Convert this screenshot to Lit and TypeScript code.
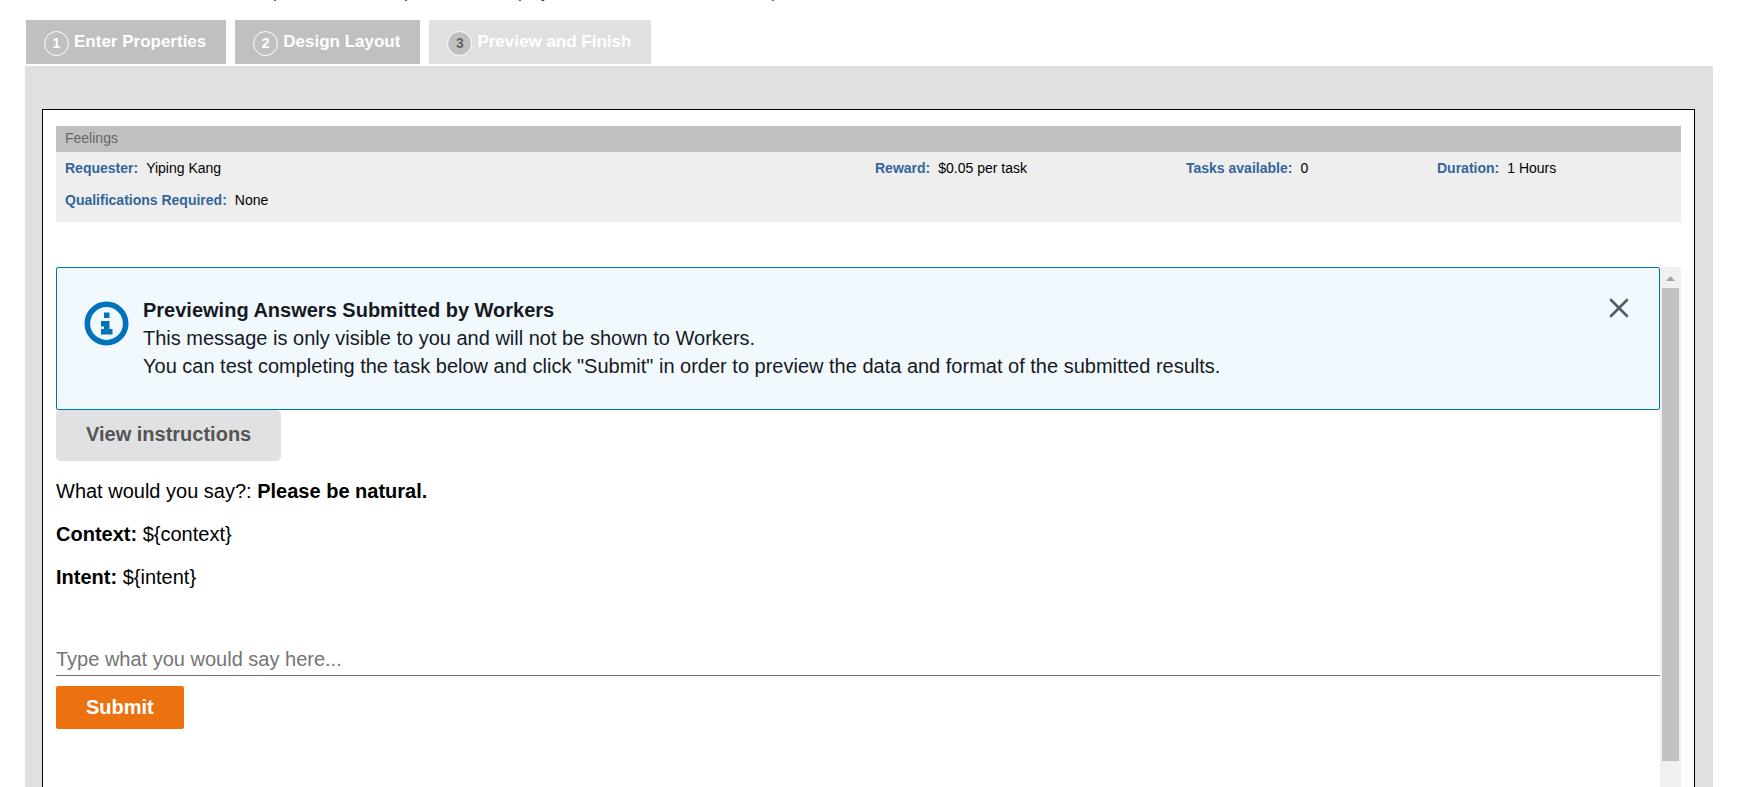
import { LitElement, html, css } from "lit";
import { customElement, state } from "lit/decorators.js";

@customElement("app-root")
export class AppRoot extends LitElement {
  @state() private noticeOpen = true;
  @state() private active = 3;

  private steps = ["Enter Properties", "Design Layout", "Preview and Finish"];

  static styles = css`
    :host {
      display: flex;
      flex-direction: column;
      box-sizing: border-box;
      height: 100vh;
      overflow: hidden;
      padding: 0 37px 0 25px;
      background: #fff;
      color: #000;
      font-family: "Liberation Sans", Arial, sans-serif;
      font-size: 20px;
      line-height: 28px;
    }
    * { box-sizing: border-box; }
    button { font-family: inherit; border: 0; cursor: pointer; }
    /* Only the descenders of the scrolled-off line remain in view. */
    .intro {
      display: grid;
      grid-template-columns: 131px 114px 24px 229px auto;
      align-content: end;
      height: 3px;
      margin-bottom: 17px;
      padding-left: 248px;
      overflow: hidden;
      flex: none;
      color: #333;
      font-size: 17px;
      line-height: 20px;
    }
    .steps { display: flex; gap: 9px; padding-left: 1px; margin-bottom: 2px; flex: none; }
    .step {
      display: flex;
      align-items: center;
      gap: 5px;
      height: 44px;
      padding: 0 20px 0 18px;
      background: #c0c0c0;
      color: #fff;
      font-size: 17px;
      font-weight: bold;
      line-height: 44px;
    }
    .step.active { background: #e0e0e0; }
    .num {
      width: 25px;
      height: 25px;
      margin-top: 3px;
      border: 1px solid #fff;
      border-radius: 50%;
      font-size: 14px;
      line-height: 22px;
      text-align: center;
    }
    .active .num { background: #c0c0c0; color: #666; }
    .panel {
      flex: 1;
      min-height: 0;
      display: flex;
      padding: 43px 18px 0 17px;
      background: #e0e0e0;
    }
    .frame {
      flex: 1;
      min-width: 0;
      display: flex;
      flex-direction: column;
      padding: 16px 13px 0;
      background: #fff;
      border: 1px solid #000;
      border-bottom: 0;
    }
    .summary { background: #eee; font-size: 14px; margin-bottom: 45px; flex: none; }
    .title {
      margin: 0;
      padding: 0 9px 2px;
      background: #c0c0c0;
      color: #666;
      font-size: 14px;
      font-weight: normal;
      line-height: 24px;
    }
    .facts {
      display: grid;
      grid-template-columns: 810fr 311fr 251fr 244fr;
      align-content: start;
      margin: 0;
      height: 70px;
      padding-left: 9px;
      line-height: 32px;
    }
    .fact { display: flex; gap: 8px; white-space: nowrap; }
    dt { color: #369; font-weight: bold; }
    dd { margin: 0; }
    .viewport { flex: 1; min-height: 0; display: flex; }
    .content { flex: 1; min-width: 0; }
    .track {
      width: 21px;
      display: flex;
      flex-direction: column;
      align-items: center;
      background: #f0f0f0;
    }
    .up { height: 21px; width: 21px; flex: none; }
    .thumb { width: 17px; height: 91%; background: #c1c1c1; }
    .notice {
      display: flex;
      align-items: flex-start;
      gap: 14px;
      height: 143px;
      padding: 28px 28px 28px 27px;
      background: #f1f9ff;
      border: 1px solid #0073bb;
      border-radius: 2px;
      color: #16191f;
    }
    .info { margin-top: 5px; width: 45px; height: 45px; flex: none; }
    .message { flex: 1; }
    .message p, .message h2 { margin: 0; font-size: 20px; line-height: 28px; }
    .close { padding: 0; width: 24px; height: 24px; background: none; }
    .instructions {
      display: block;
      height: 51px;
      padding: 0 30px 2px;
      border-radius: 5px;
      background: #e0e1e3;
      color: #555;
      font-size: 20px;
      font-weight: bold;
    }
    .prompt { margin: 17px 0 0; line-height: 26px; }
    .answer {
      display: block;
      width: 100%;
      height: 36px;
      margin: 50px 0 10px;
      padding: 4px 0 0;
      border: 0;
      border-bottom: 1px solid #737373;
      border-radius: 0;
      outline: 0;
      background: none;
      font-family: inherit;
      font-size: 20px;
    }
    .answer::placeholder { color: #757575; }
    .submit {
      height: 43px;
      padding: 0 30px;
      border-radius: 2px;
      background: #ec7211;
      color: #fff;
      font-size: 20px;
      font-weight: bold;
    }
  `;

  private fact(name: string, value: string) {
    return html`<div class="fact"><dt>${name}:</dt><dd>${value}</dd></div>`;
  }

  render() {
    return html`
      <div class="intro" aria-hidden="true">
        ${["p", "p", "p", "j", "p"].map((c) => html`<span>${c}</span>`)}
      </div>
      <nav class="steps">
        ${this.steps.map((label, i) => html`
          <button class="step ${this.active === i + 1 ? "active" : ""}" @click=${() => (this.active = i + 1)}>
            <span class="num">${i + 1}</span><span>${label}</span>
          </button>`)}
      </nav>
      <main class="panel">
        <div class="frame">
          <section class="summary">
            <h1 class="title">Feelings</h1>
            <dl class="facts">
              ${this.fact("Requester", "Yiping Kang")}
              ${this.fact("Reward", "$0.05 per task")}
              ${this.fact("Tasks available", "0")}
              ${this.fact("Duration", "1 Hours")}
              ${this.fact("Qualifications Required", "None")}
            </dl>
          </section>
          <div class="viewport">
            <div class="content">
              ${this.noticeOpen ? html`
                <section class="notice">
                  <svg class="info" viewBox="0 0 45 45">
                    <circle cx="22.5" cy="22.5" r="19.2" fill="none" stroke="#0073bb" stroke-width="5.6" />
                    <path fill="#0073bb" d="M20 11.5h5.5v5.5H20zM17 20h8.500v8h3v5.500H17V28h3v-2.500h-3z" />
                  </svg>
                  <div class="message">
                    <h2>Previewing Answers Submitted by Workers</h2>
                    <p>This message is only visible to you and will not be shown to Workers.</p>
                    <p>You can test completing the task below and click "Submit" in order to preview the data and format of the submitted results.</p>
                  </div>
                  <button class="close" aria-label="Close" @click=${() => (this.noticeOpen = false)}>
                    <svg width="24" height="24" viewBox="0 0 24 24"><path d="M4 4l16 16M20 4L4 20" stroke="#545b64" stroke-width="2.600" stroke-linecap="round" /></svg>
                  </button>
                </section>` : ""}
              <button class="instructions">View instructions</button>
              <p class="prompt">What would you say?: <b>Please be natural.</b></p>
              <p class="prompt"><b>Context:</b> \${context}</p>
              <p class="prompt"><b>Intent:</b> \${intent}</p>
              <input class="answer" aria-label="Your answer" placeholder="Type what you would say here..." />
              <button class="submit">Submit</button>
            </div>
            <div class="track">
              <svg class="up" viewBox="0 0 21 21"><path fill="#a3a3a3" d="M6 14l4.500-5 4.500 5z" /></svg>
              <div class="thumb"></div>
            </div>
          </div>
        </div>
      </main>
    `;
  }
}
